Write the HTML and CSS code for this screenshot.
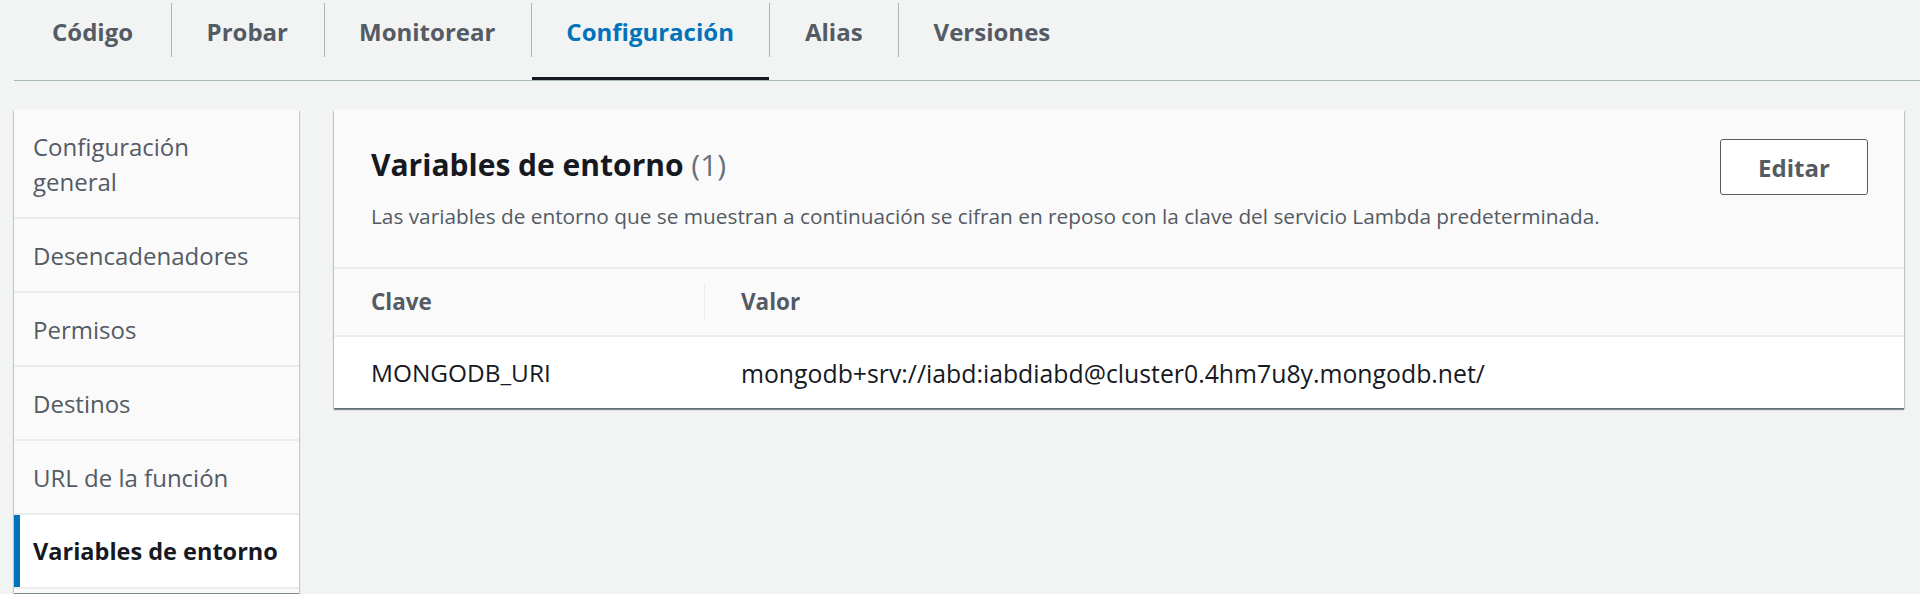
FILE: index.html
```html
<!DOCTYPE html>
<html lang="es">
<head>
<meta charset="utf-8">
<title>Configuración - Variables de entorno</title>
<link rel="stylesheet" href="styles.css">
</head>
<body>
<nav class="tabs">
  <a class="tab">Código</a>
  <a class="tab">Probar</a>
  <a class="tab">Monitorear</a>
  <a class="tab tab-active">Configuración</a>
  <a class="tab">Alias</a>
  <a class="tab">Versiones</a>
</nav>
<div class="layout">
  <ul class="sidenav">
    <li class="side-item">Configuración general</li>
    <li class="side-item">Desencadenadores</li>
    <li class="side-item">Permisos</li>
    <li class="side-item">Destinos</li>
    <li class="side-item">URL de la función</li>
    <li class="side-item side-active">Variables de entorno</li>
  </ul>
  <section class="panel">
    <header class="panel-header">
      <div class="panel-titles">
        <h2 class="panel-title">Variables de entorno <span class="count">(1)</span></h2>
        <p class="panel-desc">Las variables de entorno que se muestran a continuación se cifran en reposo con la clave del servicio Lambda predeterminada.</p>
      </div>
      <button class="btn">Editar</button>
    </header>
    <div class="table">
      <div class="row row-head">
        <div class="cell cell-key">Clave</div>
        <div class="cell cell-val"><span class="col-sep"></span>Valor</div>
      </div>
      <div class="row row-body">
        <div class="cell cell-key">MONGODB_URI</div>
        <div class="cell cell-val cell-uri">mongodb+srv://iabd:iabdiabd@cluster0.4hm7u8y.mongodb.net/</div>
      </div>
    </div>
  </section>
</div>
</body>
</html>
```
FILE: styles.css
```css
* { box-sizing: border-box; }
html, body { margin: 0; padding: 0; }
body {
  background: #f2f3f3;
  font-family: "Open Sans", "Noto Sans", sans-serif;
  color: #16191f;
  height: 594px;
  overflow: hidden;
}

/* Tabs */
.tabs {
  display: flex;
  margin-left: 14px;
  height: 81px;
  border-bottom: 1px solid #aab7b8;
}
.tab {
  position: relative;
  display: block;
  height: 80px;
  padding: 14px 35.5px 0;
  font-size: 24px;
  line-height: 36px;
  font-weight: 700;
  color: #545b64;
  white-space: nowrap;
}
.tab:first-child { padding-left: 38px; padding-right: 38px; }
.tab + .tab::before {
  content: "";
  position: absolute;
  left: 0;
  top: 3px;
  height: 54px;
  width: 1px;
  background: #aab7b8;
}
.tab-active { color: #0073bb; }
.tab-active::after {
  content: "";
  position: absolute;
  left: 1px;
  right: 0;
  bottom: 0;
  height: 3px;
  background: #16191f;
}

/* Layout */
.layout {
  display: flex;
  align-items: flex-start;
  gap: 35px;
  padding: 29px 16px 0 14px;
}

/* Side navigation */
.sidenav {
  list-style: none;
  margin: 0;
  padding: 0 0 4px;
  width: 285px;
  flex: none;
  background: #fafafa;
  box-shadow: 0 1px 1px 0 rgba(0,28,36,.3), 1px 1px 1px 0 rgba(0,28,36,.15), -1px 1px 1px 0 rgba(0,28,36,.15);
}
.side-item {
  padding: 19px 26px 18px 19px;
  font-size: 24px;
  line-height: 35px;
  color: #545b64;
  border-bottom: 2px solid #eaeded;
}
.side-active {
  background: #ffffff;
  color: #16191f;
  font-weight: 700;
  font-size: 23.5px;
  white-space: nowrap;
  padding-right: 8px;
  box-shadow: inset 6px 0 0 #0073bb;
}

/* Panel */
.panel {
  flex: 1;
  background: #ffffff;
  box-shadow: 0 2px 1px 0 rgba(0,28,36,.45), 1px 1px 1px 0 rgba(0,28,36,.15), -1px 1px 1px 0 rgba(0,28,36,.15);
}
.panel-header {
  display: flex;
  justify-content: space-between;
  align-items: flex-start;
  padding: 29px 36px 36px 37px;
  background: #fafafa;
  border-bottom: 2px solid #eaeded;
}
.panel-title {
  margin: 6px 0 0;
  font-size: 30px;
  line-height: 40px;
  font-weight: 700;
  color: #16191f;
}
.count {
  font-weight: 400;
  color: #687078;
}
.panel-desc {
  margin: 16px 0 0;
  font-size: 20.8px;
  line-height: 30px;
  color: #545b64;
}
.btn {
  width: 148px;
  height: 56px;
  flex: none;
  background: #ffffff;
  border: 1px solid #545b64;
  border-radius: 3px;
  font-family: inherit;
  font-size: 24px;
  font-weight: 700;
  color: #545b64;
  padding: 0;
}

/* Table */
.row {
  display: flex;
}
.row-head {
  height: 68px;
  background: #fafafa;
  border-bottom: 2px solid #eaeded;
  align-items: center;
}
.row-body {
  height: 71px;
  align-items: center;
  background: #ffffff;
}
.cell {
  padding-left: 37px;
  white-space: nowrap;
}
.cell-key { width: 370px; flex: none; }
.cell-val { position: relative; flex: 1; }
.row-head .cell {
  font-size: 22.5px;
  font-weight: 700;
  color: #545b64;
  line-height: 36px;
}
.row-body .cell {
  font-size: 24.4px;
  color: #16191f;
  line-height: 36px;
}
.row-body .cell-uri { font-size: 24.8px; }
.col-sep {
  position: absolute;
  left: 0;
  top: 0;
  width: 1px;
  height: 36px;
  background: #eaeded;
}
```
